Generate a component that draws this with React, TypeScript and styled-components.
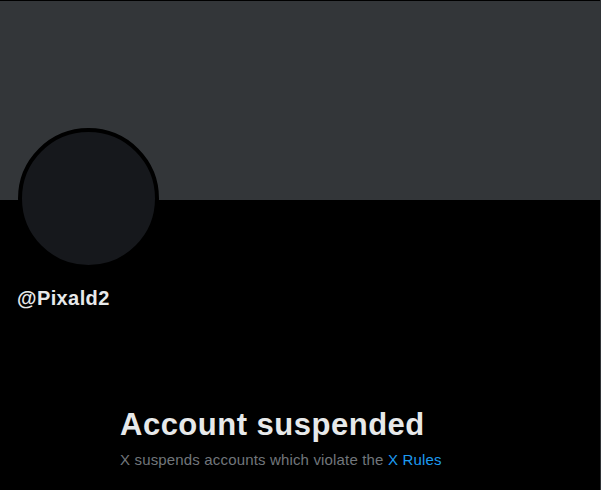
import React from "react";
import styled, { createGlobalStyle } from "styled-components";

const Global = createGlobalStyle`
  html, body { margin: 0; padding: 0; background: #000; }
  body { font-family: "Liberation Sans", Arial, sans-serif; }
`;

const Column = styled.main`
  box-sizing: border-box;
  width: 601px;
  min-height: 490px;
  padding-top: 1px;
  background: #000;
  border-right: 1px solid #2f3336;
  display: flex;
  flex-direction: column;
`;

const Banner = styled.div`
  height: 199px;
  background: #333639;
`;

const ProfileHeader = styled.div`
  display: flex;
  flex-direction: column;
  align-items: flex-start;
  padding: 0 16px 0 17px;
`;

const Avatar = styled.div`
  box-sizing: border-box;
  width: 141px;
  height: 141px;
  margin-top: -72px;
  margin-left: 1px;
  border-radius: 50%;
  border: 4px solid #000;
  background: #16181c;
`;

const Handle = styled.div`
  margin-top: 17px;
  color: #e7e9ea;
  font-size: 20px;
  font-weight: 800;
  line-height: 24px;
  letter-spacing: 0.4px;
`;

const Empty = styled.section`
  display: flex;
  flex-direction: column;
  align-items: flex-start;
  padding: 0 0 0 120px;
  margin-top: 97px;
`;

const Title = styled.h2`
  margin: 0;
  color: #e7e9ea;
  font-size: 31px;
  font-weight: 800;
  line-height: 36px;
  letter-spacing: 0.5px;
`;

const Sub = styled.p`
  margin: 7px 0 0;
  color: #71767b;
  font-size: 15px;
  line-height: 20px;
  letter-spacing: 0.16px;
`;

const Link = styled.a`
  color: #1d9bf0;
  text-decoration: none;
`;

export default function App() {
  return (
    <>
      <Global />
      <Column>
        <Banner />
        <ProfileHeader>
          <Avatar />
          <Handle>@Pixald2</Handle>
        </ProfileHeader>
        <Empty>
          <Title>Account suspended</Title>
          <Sub>
            X suspends accounts which violate the <Link href="#">X Rules</Link>
          </Sub>
        </Empty>
      </Column>
    </>
  );
}
